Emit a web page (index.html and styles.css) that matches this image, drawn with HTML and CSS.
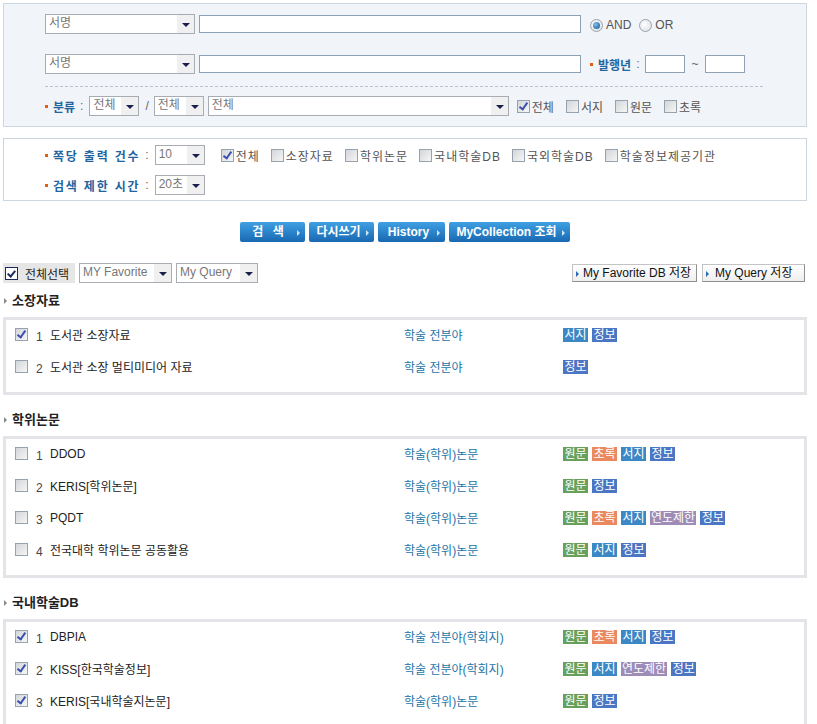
FILE: index.html
```html
<!DOCTYPE html>
<html lang="ko">
<head>
<meta charset="UTF-8">
<title>통합검색</title>
<link rel="stylesheet" href="styles.css">
</head>
<body>
<div class="page">

    <!-- 검색 조건 -->
    <div class="search-box">
        <div class="row">
            <div class="sel sel-field"><span class="sel-text">서명</span><span class="sel-arrow"></span></div>
            <input class="txt txt-query" type="text">
            <span class="radio on"></span><span class="opt">AND</span>
            <span class="radio"></span><span class="opt">OR</span>
        </div>
        <div class="row row-gap">
            <div class="sel sel-field"><span class="sel-text">서명</span><span class="sel-arrow"></span></div>
            <input class="txt txt-query" type="text">
            <span class="label label-year">발행년</span><span class="colon">:</span>
            <input class="txt txt-year" type="text">
            <span class="tilde">~</span>
            <input class="txt txt-year" type="text">
        </div>
        <div class="divider"></div>
        <div class="row">
            <span class="label">분류</span><span class="colon">:</span>
            <div class="sel sel-small"><span class="sel-text">전체</span><span class="sel-arrow"></span></div>
            <span class="slash">/</span>
            <div class="sel sel-small"><span class="sel-text">전체</span><span class="sel-arrow"></span></div>
            <div class="sel sel-wide"><span class="sel-text">전체</span><span class="sel-arrow"></span></div>
            <div class="checks">
                <span class="chk on"></span><span class="chk-text">전체</span>
                <span class="chk"></span><span class="chk-text">서지</span>
                <span class="chk"></span><span class="chk-text">원문</span>
                <span class="chk"></span><span class="chk-text">초록</span>
            </div>
        </div>
    </div>

    <!-- 출력 옵션 -->
    <div class="option-box">
        <div class="row">
            <span class="label label-wide">쪽당 출력 건수</span><span class="colon">:</span>
            <div class="sel sel-small"><span class="sel-text">10</span><span class="sel-arrow"></span></div>
            <div class="checks checks-db">
                <span class="chk on"></span><span class="chk-text">전체</span>
                <span class="chk"></span><span class="chk-text">소장자료</span>
                <span class="chk"></span><span class="chk-text">학위논문</span>
                <span class="chk"></span><span class="chk-text">국내학술DB</span>
                <span class="chk"></span><span class="chk-text">국외학술DB</span>
                <span class="chk"></span><span class="chk-text">학술정보제공기관</span>
            </div>
        </div>
        <div class="row row-gap2">
            <span class="label label-wide">검색 제한 시간</span><span class="colon">:</span>
            <div class="sel sel-small"><span class="sel-text">20초</span><span class="sel-arrow"></span></div>
        </div>
    </div>

    <div class="buttons">
        <a class="btn btn-search">검 색</a>
        <a class="btn btn-reset">다시쓰기</a>
        <a class="btn btn-history">History</a>
        <a class="btn btn-collection">MyCollection 조회</a>
    </div>

    <div class="toolbar">
        <div class="select-all"><span class="chk-all"></span>전체선택</div>
        <div class="sel sel-fav"><span class="sel-text">MY Favorite</span><span class="sel-arrow"></span></div>
        <div class="sel sel-query"><span class="sel-text">My Query</span><span class="sel-arrow"></span></div>
        <div class="save-btns">
            <a class="save-btn save-fav">My Favorite DB 저장</a>
            <a class="save-btn save-query">My Query 저장</a>
        </div>
    </div>

    <!-- 검색 대상 DB -->
    <h3 class="sec-title">소장자료</h3>
    <div class="result">
        <div class="item">
            <span class="chk on"></span><span class="num">1</span><span class="name">도서관 소장자료</span>
            <span class="cat">학술 전분야</span>
            <span class="tags"><span class="tag t-bib">서지</span><span class="tag t-info">정보</span></span>
        </div>
        <div class="item">
            <span class="chk"></span><span class="num">2</span><span class="name">도서관 소장 멀티미디어 자료</span>
            <span class="cat">학술 전분야</span>
            <span class="tags"><span class="tag t-info">정보</span></span>
        </div>
    </div>

    <h3 class="sec-title">학위논문</h3>
    <div class="result">
        <div class="item">
            <span class="chk"></span><span class="num">1</span><span class="name">DDOD</span>
            <span class="cat">학술(학위)논문</span>
            <span class="tags"><span class="tag t-full">원문</span><span class="tag t-abs">초록</span><span class="tag t-bib">서지</span><span class="tag t-info">정보</span></span>
        </div>
        <div class="item">
            <span class="chk"></span><span class="num">2</span><span class="name">KERIS[학위논문]</span>
            <span class="cat">학술(학위)논문</span>
            <span class="tags"><span class="tag t-full">원문</span><span class="tag t-info">정보</span></span>
        </div>
        <div class="item">
            <span class="chk"></span><span class="num">3</span><span class="name">PQDT</span>
            <span class="cat">학술(학위)논문</span>
            <span class="tags"><span class="tag t-full">원문</span><span class="tag t-abs">초록</span><span class="tag t-bib">서지</span><span class="tag t-year">연도제한</span><span class="tag t-info">정보</span></span>
        </div>
        <div class="item">
            <span class="chk"></span><span class="num">4</span><span class="name">전국대학 학위논문 공동활용</span>
            <span class="cat">학술(학위)논문</span>
            <span class="tags"><span class="tag t-full">원문</span><span class="tag t-bib">서지</span><span class="tag t-info">정보</span></span>
        </div>
    </div>

    <h3 class="sec-title">국내학술DB</h3>
    <div class="result">
        <div class="item">
            <span class="chk on"></span><span class="num">1</span><span class="name">DBPIA</span>
            <span class="cat">학술 전분야(학회지)</span>
            <span class="tags"><span class="tag t-full">원문</span><span class="tag t-abs">초록</span><span class="tag t-bib">서지</span><span class="tag t-info">정보</span></span>
        </div>
        <div class="item">
            <span class="chk on"></span><span class="num">2</span><span class="name">KISS[한국학술정보]</span>
            <span class="cat">학술 전분야(학회지)</span>
            <span class="tags"><span class="tag t-full">원문</span><span class="tag t-bib">서지</span><span class="tag t-year">연도제한</span><span class="tag t-info">정보</span></span>
        </div>
        <div class="item">
            <span class="chk on"></span><span class="num">3</span><span class="name">KERIS[국내학술지논문]</span>
            <span class="cat">학술(학위)논문</span>
            <span class="tags"><span class="tag t-full">원문</span><span class="tag t-info">정보</span></span>
        </div>
    </div>

</div>
</body>
</html>
```

FILE: styles.css
```css
body {
    font-family: "Liberation Sans", "Noto Sans CJK KR", sans-serif;
    font-size: 12px;
    color: #333;
    margin: 0;
    padding: 0;
}
.page {
    padding: 3px 10px 0 3px;
}
.row {
    display: flex;
    align-items: center;
    height: 20px;
}
.row-gap {
    margin-top: 20px;
}
.row-gap2 {
    margin-top: 10px;
}

/* 검색 박스 */
.search-box {
    background-color: #f1f4f8;
    border: 1px solid #cbd6df;
    padding: 10px 0 10px 41px;
}
.divider {
    width: 718px;
    border-top: 1px dashed #b9c0c7;
    margin: 12px 0 9px;
}
.option-box {
    background-color: #fff;
    border: 1px solid #cbd6df;
    margin-top: 11px;
    padding: 6px 0 5px 41px;
}

/* 셀렉트 박스 */
.sel {
    display: flex;
    height: 18px;
    border: 1px solid #a8adb3;
    background: #fff;
    box-sizing: content-box;
}
.sel-text {
    flex: 1;
    padding-left: 3px;
    color: #777;
    line-height: 16px;
    white-space: nowrap;
    overflow: hidden;
}
.sel-arrow {
    width: 17px;
    background-color: #f0f0f0;
    position: relative;
}
.sel-arrow::after {
    content: "";
    position: absolute;
    left: 5px;
    top: 8px;
    border-left: 4px solid transparent;
    border-right: 4px solid transparent;
    border-top: 4px solid #1a1f4d;
}
.sel-field { width: 148px; }
.sel-small { width: 48px; }
.sel-wide { width: 299px; margin-left: 4px; }
.sel-fav { width: 91px; margin-left: 4px; }
.sel-query { width: 80px; margin-left: 4px; }

/* 텍스트 입력 */
.txt {
    height: 16px;
    border: 1px solid #8fa2b4;
    padding: 0;
    margin: 0;
    background: #fff;
    box-sizing: content-box;
}
.txt-query {
    width: 380px;
    margin-left: 4px;
    margin-right: 9px;
}
.txt-year {
    width: 38px;
}

/* 라디오 */
.radio {
    width: 11px;
    height: 11px;
    border: 1px solid #9aa3ab;
    border-radius: 50%;
    background: radial-gradient(circle at 40% 40%, #fff, #d8dbde);
    position: relative;
    margin-top: 2px;
}
.radio.on::after {
    content: "";
    position: absolute;
    left: 2px;
    top: 2px;
    width: 7px;
    height: 7px;
    border-radius: 50%;
    background: radial-gradient(circle at 35% 35%, #7cc0ef, #14508f);
}
.opt {
    color: #555;
    margin-left: 3px;
    margin-right: 8px;
    padding-top: 2px;
}

/* 라벨 */
.label {
    color: #1f65a0;
    font-weight: bold;
    padding-left: 8px;
    position: relative;
}
.label::before {
    content: "";
    position: absolute;
    left: 0;
    top: 7px;
    width: 3px;
    height: 3px;
    background-color: #e0600f;
}
.label-wide {
    letter-spacing: 1.8px;
}
.colon {
    color: #666;
    margin: 0 6px 0 5px;
}
.tilde {
    color: #666;
    margin: 0 7px 0 6px;
}
.slash {
    color: #666;
    margin: 0 5px 0 6px;
}

/* 체크박스 */
.checks {
    display: flex;
    align-items: center;
    margin-left: 8px;
}
.checks-db {
    margin-left: 16px;
}
.chk {
    display: inline-block;
    flex: none;
    width: 11px;
    height: 11px;
    border: 1px solid #96a2ad;
    background: linear-gradient(135deg, #d2d5d9, #f6f6f6);
    position: relative;
}
.chk.on::after {
    content: "";
    position: absolute;
    left: 3px;
    top: 0px;
    width: 3px;
    height: 7px;
    border-right: 2px solid #3a4fb0;
    border-bottom: 2px solid #3a4fb0;
    transform: rotate(35deg);
}
.chk-text {
    color: #555;
    margin-left: 2px;
    margin-right: 12px;
}
.checks-db .chk-text {
    letter-spacing: 1px;
    margin-right: 11px;
}

/* 버튼 */
.buttons {
    display: flex;
    justify-content: center;
    gap: 4px;
    margin-top: 21px;
}
.btn {
    height: 20px;
    line-height: 20px;
    border-radius: 2px;
    background: linear-gradient(#3fa0e2, #1868b2);
    color: #fff;
    font-weight: bold;
    text-align: center;
    box-sizing: border-box;
    padding-right: 6px;
    position: relative;
}
.btn::after {
    content: "";
    position: absolute;
    right: 5px;
    top: 8px;
    border-top: 3px solid transparent;
    border-bottom: 3px solid transparent;
    border-left: 3px solid #cfe6f7;
}
.btn-search { width: 65px; letter-spacing: 3px; }
.btn-reset { width: 65px; }
.btn-history { width: 67px; }
.btn-collection { width: 121px; }

/* 툴바 */
.toolbar {
    display: flex;
    align-items: center;
    margin-top: 21px;
    margin-bottom: 10px;
    height: 20px;
}
.select-all {
    display: flex;
    align-items: center;
    width: 72px;
    height: 20px;
    background-color: #e6e6e6;
    color: #222;
}
.chk-all {
    width: 11px;
    height: 11px;
    border: 1px solid #1c2a5c;
    background: #fff;
    margin: 0 7px 0 2px;
    position: relative;
}
.chk-all::after {
    content: "";
    position: absolute;
    left: 3px;
    top: 1px;
    width: 3px;
    height: 6px;
    border-right: 2px solid #1c2a5c;
    border-bottom: 2px solid #1c2a5c;
    transform: rotate(40deg);
}
.save-btns {
    margin-left: auto;
    margin-right: 2px;
    display: flex;
    gap: 5px;
}
.save-btn {
    height: 18px;
    line-height: 17px;
    border: 1px solid #c3c3c3;
    border-right-color: #8f8f8f;
    border-bottom-color: #8f8f8f;
    background: linear-gradient(#fff, #eee);
    color: #111;
    padding-left: 10px;
    box-sizing: border-box;
    position: relative;
}
.save-btn::before {
    content: "";
    position: absolute;
    left: 3px;
    top: 6px;
    border-top: 3px solid transparent;
    border-bottom: 3px solid transparent;
    border-left: 3px solid #2a6ab0;
}
.save-fav { width: 125px; }
.save-query { width: 103px; padding-left: 12px; }

/* 결과 목록 */
.sec-title {
    font-size: 13px;
    font-weight: bold;
    color: #222;
    line-height: 16px;
    margin: 0 0 8px;
    padding-left: 9px;
    position: relative;
}
.sec-title::before {
    content: "";
    position: absolute;
    left: 1px;
    top: 5px;
    border-top: 3px solid transparent;
    border-bottom: 3px solid transparent;
    border-left: 3px solid #888;
}
.result {
    border: 3px solid #e2e4e7;
    padding: 0 0 8px 9px;
    margin-bottom: 17px;
}
.item {
    display: grid;
    grid-template-columns: 21px 14px 354px 159px 1fr;
    align-items: center;
    height: 32px;
    padding-bottom: 3px;
    box-sizing: border-box;
}
.num {
    color: #444;
    padding-top: 4px;
}
.name {
    color: #222;
}
.cat {
    color: #1d74a6;
}
.tags {
    display: flex;
    gap: 4px;
}
.tag {
    height: 14px;
    line-height: 14px;
    padding: 0 1px;
    color: #fff;
    min-width: 25px;
    text-align: center;
    box-sizing: border-box;
}
.t-full { background-color: #67a05a; }
.t-abs { background-color: #ea895d; }
.t-bib { background-color: #3c88c5; }
.t-info { background-color: #4b76c3; }
.t-year { background-color: #9d8db6; }
```
